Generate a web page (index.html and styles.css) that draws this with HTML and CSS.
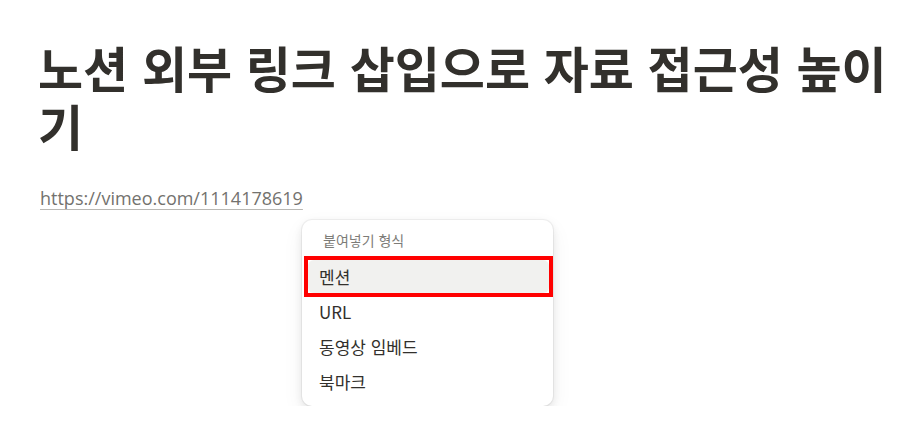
FILE: index.html
```html
<!DOCTYPE html>
<html lang="ko">
<head>
<meta charset="utf-8">
<link rel="stylesheet" href="styles.css">
</head>
<body>
<main class="page">
  <h1 class="title">노션 외부 링크 삽입으로 자료 접근성 높이기</h1>
  <div class="block">
    <span class="link">https://vimeo.com/1114178619</span>
  </div>
  <div class="paste-popup">
    <div class="popup-head">붙여넣기 형식</div>
    <div class="red-frame">
      <div class="popup-item current">멘션</div>
    </div>
    <div class="popup-item">URL</div>
    <div class="popup-item">동영상 임베드</div>
    <div class="popup-item">북마크</div>
  </div>
</main>
</body>
</html>
```

FILE: styles.css
```css
html, body {
  margin: 0;
  padding: 0;
  background: #ffffff;
}
body {
  font-family: "Noto Sans CJK KR", "Noto Sans", sans-serif;
  color: #37352f;
}
.page {
  padding: 38px 20px 0 38px;
}
.title {
  margin: 0;
  font-size: 49px;
  font-weight: 700;
  line-height: 58px;
  color: #32302c;
}
.block {
  margin-top: 32px;
  padding-left: 2px;
  line-height: 24px;
}
.link {
  font-family: "Open Sans", "Noto Sans CJK KR", sans-serif;
  font-size: 18px;
  color: #73726e;
  text-decoration: underline;
  text-decoration-color: #b9b8b4;
  text-underline-offset: 4px;
}
.paste-popup {
  margin-top: 10px;
  margin-left: 264px;
  width: 251px;
  background: #fff;
  border-radius: 10px;
  box-shadow: 0 0 0 1px rgba(15,15,15,0.05), 0 3px 8px rgba(15,15,15,0.09), 0 8px 22px rgba(15,15,15,0.06);
  padding: 6px 4px 8px 6px;
  box-sizing: border-box;
  display: flex;
  flex-direction: column;
  gap: 2px;
}
.popup-head {
  font-size: 14px;
  color: #7d7c78;
  padding: 4px 15px 8px;
  line-height: 20px;
}
.red-frame {
  outline: 4px solid #ff0000;
}
.popup-item {
  font-size: 17px;
  line-height: 33px;
  height: 33px;
  padding: 0 11px;
  color: #32302c;
  border-radius: 6px;
}
.popup-item.current {
  background: #f1f1ef;
}
```
